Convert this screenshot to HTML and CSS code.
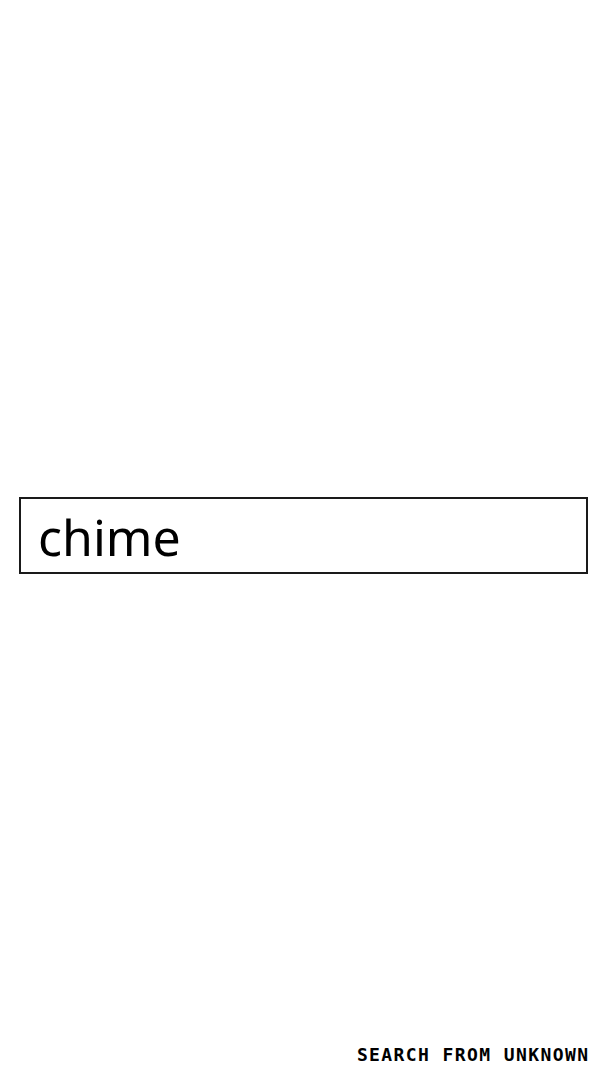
FILE: index.html
```html
<!DOCTYPE html>
<html>
<head>
<meta charset="utf-8">
<link rel="stylesheet" href="styles.css">
</head>
<body>
<main class="page">
  <div class="center">
    <div class="search-box"><span class="query">chime</span></div>
  </div>
  <footer class="footer"><span class="footer-text">SEARCH FROM UNKNOWN</span></footer>
</main>
</body>
</html>
```
FILE: styles.css
```css
html, body {
  margin: 0;
  padding: 0;
  background: #ffffff;
}
.page {
  height: 1080px;
  display: flex;
  flex-direction: column;
  padding: 0 20px 0 19px;
  box-sizing: border-box;
}
.center {
  flex: 1;
  display: flex;
  align-items: center;
  padding-top: 28px;
}
.search-box {
  width: 100%;
  height: 77px;
  border: 2px solid #1a1a1a;
  box-sizing: border-box;
  display: flex;
  align-items: center;
  padding-left: 17px;
}
.query {
  font-family: "Noto Sans", "Open Sans", sans-serif;
  font-size: 50px;
  color: #000;
  line-height: 1;
  margin-top: 2px;
}
.footer {
  text-align: right;
  font-family: "DejaVu Sans Mono", monospace;
  font-weight: bold;
  font-size: 18px;
  color: #000;
  padding-bottom: 13px;
  line-height: 24px;
}
.footer-text {
  letter-spacing: 1.4px;
  margin-right: -1.4px;
}
```
